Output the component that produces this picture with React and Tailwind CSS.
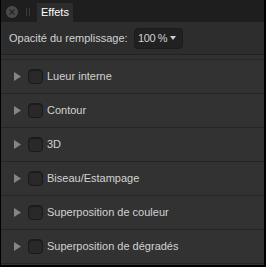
import React from 'react';

const effects = [
  'Lueur interne',
  'Contour',
  '3D',
  'Biseau/Estampage',
  'Superposition de couleur',
  'Superposition de dégradés',
];

const EffectRow = ({ label }) => (
  <div className="h-[34px] flex items-center border-t border-[#252525]">
    <svg width="7" height="9" viewBox="0 0 7 9" className="ml-[13px]">
      <path d="M0 0 L7 4.5 L0 9 Z" fill="#858585" />
    </svg>
    <div className="ml-[7px] w-[15px] h-[15px] rounded-[4px] bg-[#292929] border border-[#1a1a1a] shadow-[inset_0_1px_1px_rgba(0,0,0,0.35)]" />
    <span className="ml-[4px] text-[11px] text-[#d2d2d2] whitespace-nowrap">{label}</span>
  </div>
);

export default function App() {
  return (
    <div className="w-[266px] h-[267px] bg-black pl-[1px] pr-[2px] pb-[2px]" style={{ fontFamily: '"Liberation Sans", Arial, sans-serif' }}>
      <div className="h-full flex flex-col bg-[#323232]">
        {/* tab bar */}
        <div className="h-[22px] bg-[#1e1e1e] flex items-end shrink-0">
          <div className="self-center ml-[5px] mt-[2px] w-[12px] h-[12px] rounded-full bg-[#4a4a4a] flex items-center justify-center">
            <svg width="6" height="6" viewBox="0 0 6 6">
              <path d="M0.5 0.5 L5.5 5.5 M5.5 0.5 L0.5 5.5" stroke="#262626" strokeWidth="1.4" />
            </svg>
          </div>
          <div className="self-center ml-[8px] mt-[2px] flex gap-[2px]">
            <div className="w-[1px] h-[8px] bg-[#3c3c3c]" />
            <div className="w-[1px] h-[8px] bg-[#3c3c3c]" />
          </div>
          <div className="ml-[7px] w-[36px] h-[19px] bg-[#2d2d2d] flex items-center pl-[4px]">
            <span className="text-[11px] text-white">Effets</span>
          </div>
        </div>

        {/* fill opacity */}
        <div className="h-[33px] bg-[#2d2d2d] border-b border-[#222] flex items-center shrink-0">
          <span className="ml-[8px] text-[11px] text-[#d2d2d2] whitespace-nowrap">Opacité du remplissage:</span>
          <div className="ml-auto mr-[81px] w-[49px] h-[21px] rounded-[4px] bg-[#212121] border border-[#1b1b1b] flex items-center pl-[3px]">
            <span className="text-[11px] text-[#d2d2d2] whitespace-nowrap tracking-[-0.4px]">100 %</span>
            <svg width="6" height="4" viewBox="0 0 6 4" className="ml-auto mr-[6px] shrink-0">
              <path d="M0 0 L6 0 L3 4 Z" fill="#cfcfcf" />
            </svg>
          </div>
        </div>

        <div className="h-[4px] shrink-0" />

        {effects.map((e) => (
          <EffectRow key={e} label={e} />
        ))}
        <div className="border-t border-[#252525]" />
      </div>
    </div>
  );
}
